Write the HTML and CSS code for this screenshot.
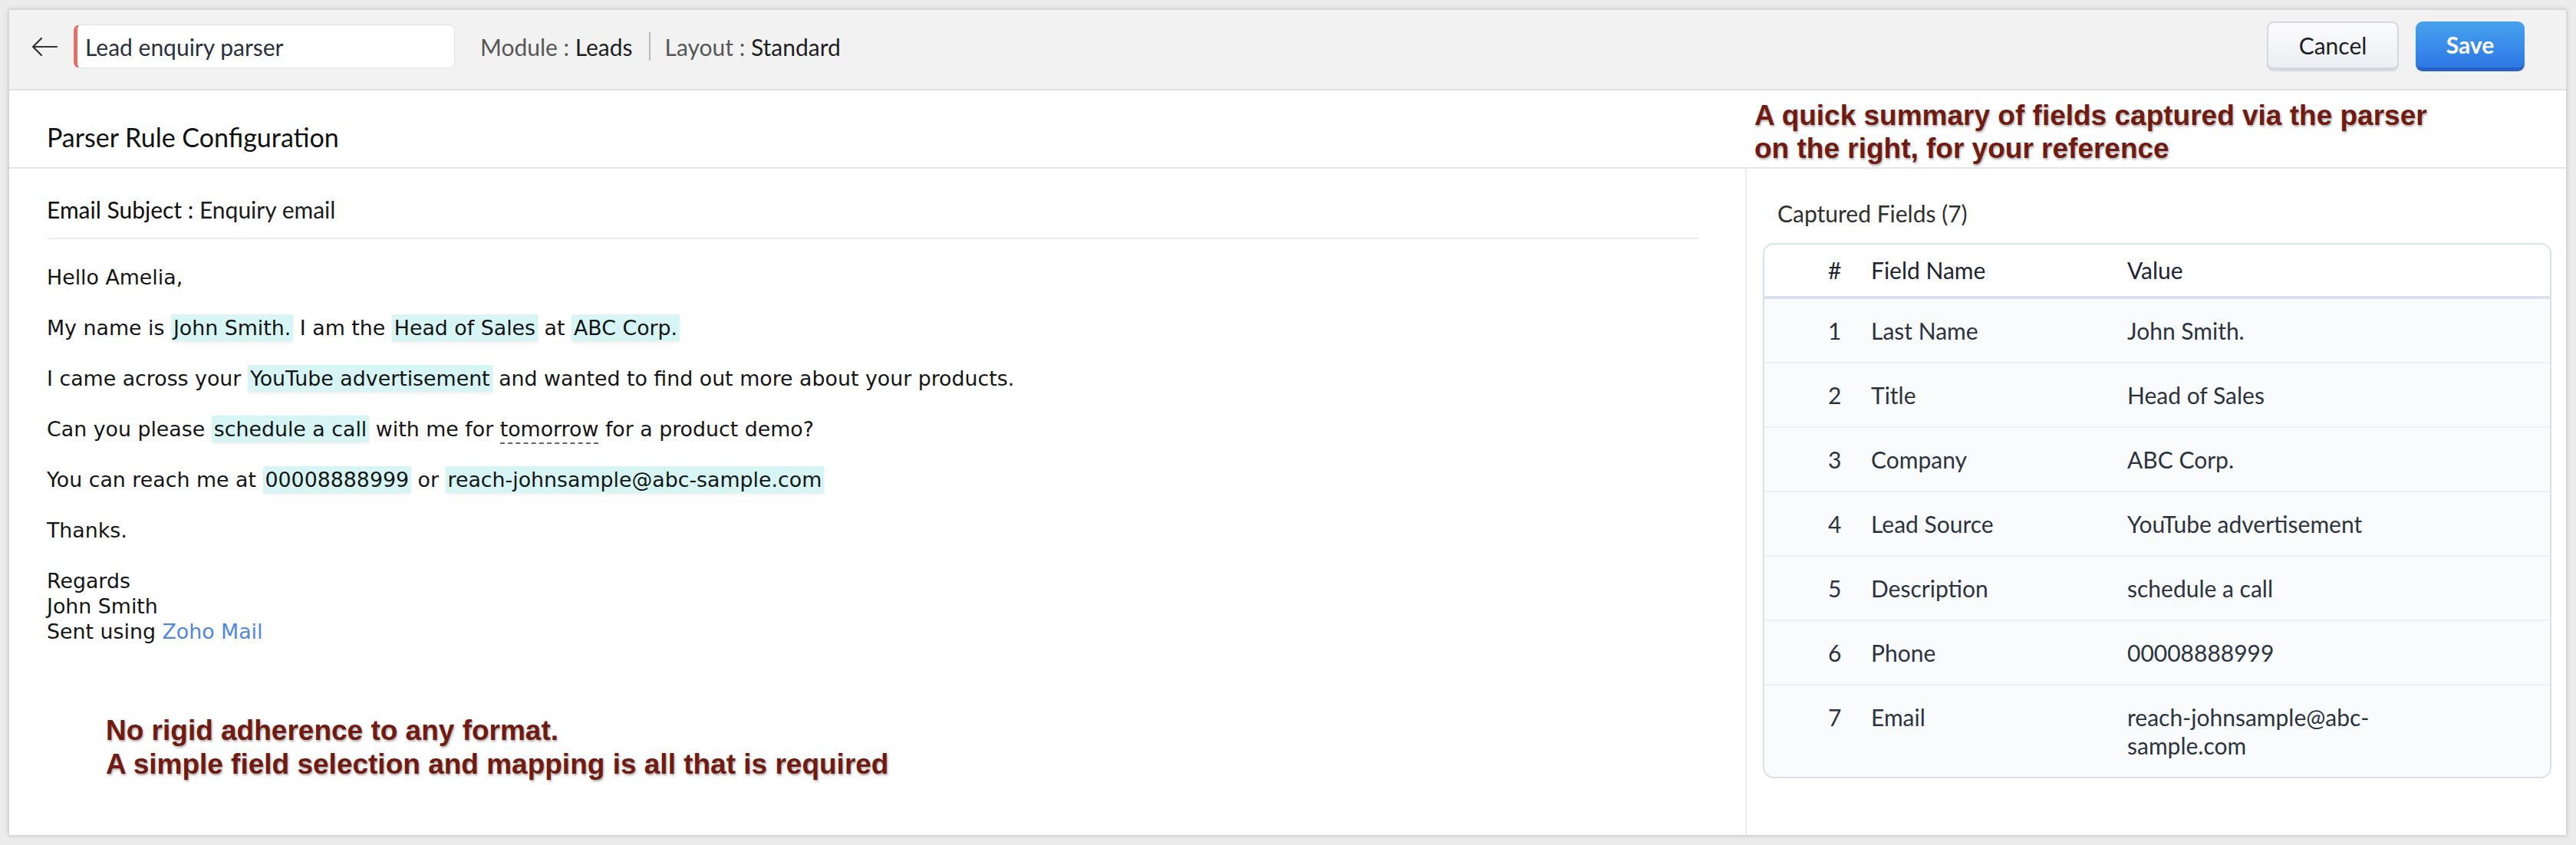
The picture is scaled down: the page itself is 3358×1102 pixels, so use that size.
FILE: index.html
```html
<!DOCTYPE html>
<html lang="en">
<head>
<meta charset="utf-8">
<title>Parser Rule Configuration</title>
<link rel="stylesheet" href="styles.css">
</head>
<body>
<div class="app">
  <header class="topbar">
    <button class="back" aria-label="Back">
      <svg width="34" height="26" viewBox="0 0 34 26"><path d="M33 13H2M13 2L2 13L13 24" fill="none" stroke="#333" stroke-width="2.2" stroke-linecap="round" stroke-linejoin="round"/></svg>
    </button>
    <div class="name-input">Lead enquiry parser</div>
    <div class="meta"><span class="lbl">Module :</span> <span class="val">Leads</span></div>
    <span class="sep"></span>
    <div class="meta"><span class="lbl">Layout :</span> <span class="val">Standard</span></div>
    <div class="spacer"></div>
    <button class="btn cancel">Cancel</button>
    <button class="btn save">Save</button>
  </header>

  <div class="titlebar"><h1>Parser Rule Configuration</h1></div>

  <div class="main">
    <section class="email">
      <div class="subject"><span class="subj-lbl">Email Subject :</span> Enquiry email</div>
      <div class="body">
        <p>Hello Amelia,</p>
        <p>My name is <span class="hl">John Smith.</span> I am the <span class="hl">Head of Sales</span> at <span class="hl">ABC Corp.</span></p>
        <p>I came across your <span class="hl">YouTube advertisement</span> and wanted to find out more about your products.</p>
        <p>Can you please <span class="hl">schedule a call</span> with me for <span class="dash">tomorrow</span> for a product demo?</p>
        <p>You can reach me at <span class="hl">00008888999</span> or <span class="hl">reach-johnsample@abc-sample.com</span></p>
        <p>Thanks.</p>
        <p>Regards<br>John Smith<br>Sent using <a class="link" href="#">Zoho Mail</a></p>
      </div>
    </section>

    <aside class="fields">
      <h2>Captured Fields (7)</h2>
      <div class="card">
        <table>
          <colgroup>
            <col class="c-num"><col class="c-name"><col class="c-val"><col>
          </colgroup>
          <thead>
            <tr><th class="num">#</th><th>Field Name</th><th>Value</th><th></th></tr>
          </thead>
          <tbody>
            <tr><td class="num">1</td><td>Last Name</td><td>John Smith.</td><td></td></tr>
            <tr><td class="num">2</td><td>Title</td><td>Head of Sales</td><td></td></tr>
            <tr><td class="num">3</td><td>Company</td><td>ABC Corp.</td><td></td></tr>
            <tr><td class="num">4</td><td>Lead Source</td><td>YouTube advertisement</td><td></td></tr>
            <tr><td class="num">5</td><td>Description</td><td>schedule a call</td><td></td></tr>
            <tr><td class="num">6</td><td>Phone</td><td>00008888999</td><td></td></tr>
            <tr><td class="num">7</td><td>Email</td><td>reach-johnsample@abc-sample.com</td><td></td></tr>
          </tbody>
        </table>
      </div>
    </aside>
  </div>

  <div class="note note-top">A quick summary of fields captured via the parser<br>on the right, for your reference</div>
  <div class="note note-bottom">No rigid adherence to any format.<br>A simple field selection and mapping is all that is required</div>
</div>
</body>
</html>
```

FILE: styles.css
```css
* { box-sizing: border-box; }

html, body { margin: 0; padding: 0; }

body {
  width: 3358px;
  height: 1102px;
  background: #ececec;
  font-family: "Lato", "Liberation Sans", sans-serif;
  overflow: hidden;
}

.app {
  position: relative;
  margin: 13px 13px 13px 12px;
  height: 1076px;
  background: #ffffff;
  box-shadow: 0 0 0 1px #d6d6d6, 0 0 6px rgba(0, 0, 0, 0.25);
  display: flex;
  flex-direction: column;
}

/* ---------- top bar ---------- */
.topbar {
  height: 105px;
  flex: 0 0 105px;
  background: #f2f2f2;
  border-bottom: 2px solid #e2e2e2;
  display: flex;
  align-items: center;
  padding: 0 54px 8px 29px;
  font-size: 30px;
}

.back {
  border: 0;
  background: transparent;
  padding: 0;
  width: 34px;
  height: 26px;
  display: flex;
  margin-right: 21px;
}

.name-input {
  width: 497px;
  height: 57px;
  background: #fff;
  border: 1px solid #e2e2e2;
  border-left: 5px solid #e2716a;
  border-radius: 8px;
  padding-left: 10px;
  display: flex;
  align-items: center;
  color: #2a3140;
}

.meta { margin-left: 33px; white-space: nowrap; }
.meta + .sep + .meta { margin-left: 0; }
.meta .lbl { color: #575757; }
.meta .val { color: #1f1f1f; }

.sep {
  width: 2px;
  height: 37px;
  background: #b9b9b9;
  margin: 0 19px 0 21px;
}

.spacer { flex: 1; }

.btn {
  font-family: "Lato", "Liberation Sans", sans-serif;
  font-size: 30px;
  height: 65px;
  border-radius: 9px;
  cursor: pointer;
}

.cancel {
  width: 172px;
  color: #1e1e24;
  background: linear-gradient(#fcfcfe, #eceef3);
  border: 2px solid #d6d8e0;
  border-bottom-width: 5px;
  margin-right: 22px;
}

.save {
  width: 142px;
  color: #ffffff;
  font-weight: 700;
  background: linear-gradient(#48a2ee, #2e78e6);
  border: 0;
  border-bottom: 5px solid #2661c6;
}

/* ---------- title ---------- */
.titlebar {
  height: 102px;
  flex: 0 0 102px;
  border-bottom: 2px solid #e6e6e6;
  display: flex;
  align-items: flex-end;
  padding: 0 0 19px 49px;
}

.titlebar h1 {
  margin: 0;
  font-size: 34px;
  line-height: 40px;
  font-weight: 400;
  color: #111;
}

/* ---------- main ---------- */
.main {
  flex: 1;
  display: flex;
  min-height: 0;
}

.email {
  flex: 1;
  border-right: 2px solid #ededed;
  padding: 35px 60px 0 49px;
}

.subject {
  font-size: 30px;
  line-height: 36px;
  color: #1c1c1c;
  padding-bottom: 19px;
  border-bottom: 2px solid #ececec;
}

.subj-lbl { color: #0e0e0e; }

.body {
  margin-top: 33px;
  font-family: "DejaVu Sans", "Verdana", sans-serif;
  font-size: 26.8px;
  line-height: 33px;
  color: #141414;
}

.body p { margin: 0 0 33px 0; }

.hl {
  background: #d6f5f4;
  padding: 2px 3px;
  box-shadow: 0 2px 4px rgba(0, 0, 0, 0.07);
}

.dash {
  border-bottom: 2px dashed #666;
  padding-bottom: 2px;
}

.link { color: #4f86df; text-decoration: none; }

/* ---------- captured fields ---------- */
.fields {
  flex: 0 0 1068px;
  padding: 40px 19px 0 21px;
}

.fields h2 {
  margin: 0 0 21px 0;
  padding-left: 19px;
  font-size: 30px;
  line-height: 36px;
  font-weight: 400;
  color: #2f2f2f;
}

.card {
  border: 2px solid #d8e1ee;
  border-radius: 14px;
  overflow: hidden;
  background: #fafbfc;
}

.card table {
  width: 100%;
  border-collapse: collapse;
  font-size: 30px;
  line-height: 37px;
  color: #2b3341;
}

.c-num { width: 139px; }
.c-name { width: 334px; }
.c-val { width: 335px; }

.card th {
  background: #ffffff;
  text-align: left;
  font-weight: 400;
  color: #1d2430;
  padding: 15px 0;
  border-bottom: 4px solid #dbe2ed;
}

.card td {
  padding: 22.5px 0;
  vertical-align: top;
  border-bottom: 2px solid #edf0f4;
}

.card tbody tr:last-child td { border-bottom: 0; }

.card .num { padding-left: 83px; }

/* ---------- annotations ---------- */
.note {
  position: absolute;
  font-family: "Liberation Sans", Arial, sans-serif;
  font-weight: 700;
  font-size: 37px;
  color: #711a11;
  text-shadow: 1px 2px 3px rgba(0, 0, 0, 0.35);
  white-space: nowrap;
}

.note-top {
  left: 2275px;
  top: 116px;
  line-height: 43px;
}

.note-bottom {
  left: 126px;
  top: 918px;
  line-height: 44px;
}
```
